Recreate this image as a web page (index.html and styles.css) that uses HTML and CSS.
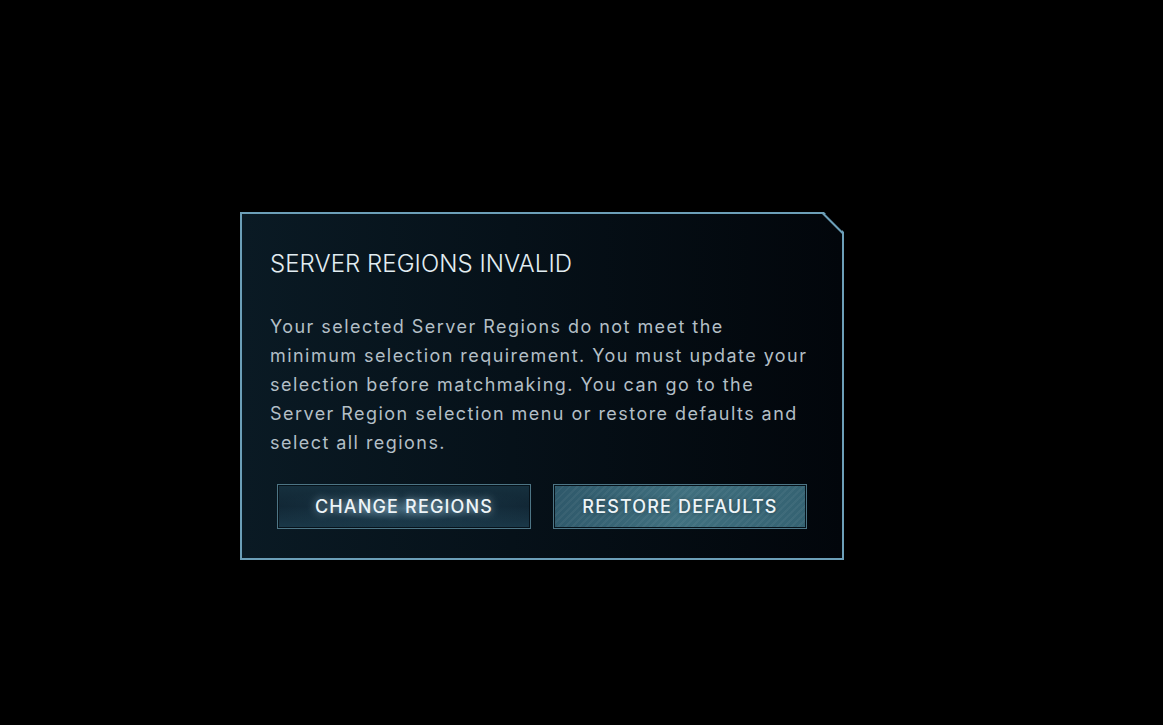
FILE: index.html
```html
<!DOCTYPE html>
<html lang="en">

<head>
    <meta charset="UTF-8">
    <meta name="viewport" content="width=device-width, initial-scale=1.0">
    <title>Server Regions Invalid</title>
    <link rel="stylesheet" href="styles.css">
</head>

<body>
    <div class="screen">
        <div class="dialog">
            <h1 class="dialog-title">SERVER REGIONS INVALID</h1>
            <p class="dialog-text">
                Your selected Server Regions do not meet the<br>
                minimum selection requirement. You must update your<br>
                selection before matchmaking. You can go to the<br>
                Server Region selection menu or restore defaults and<br>
                select all regions.
            </p>
            <div class="actions">
                <button class="btn btn-glow"><span>CHANGE REGIONS</span></button>
                <button class="btn btn-focus"><span>RESTORE DEFAULTS</span></button>
            </div>
        </div>
    </div>
</body>

</html>
```

FILE: styles.css
```css
html,
body {
    margin: 0;
    background-color: #000;
    height: 100%;
}

.screen {
    padding: 212px 0 0 240px;
}

.dialog {
    position: relative;
    box-sizing: border-box;
    width: 604px;
    height: 348px;
    padding: 34px 28px 0 28px;
    border: 2px solid #6c9fb8;
    background: linear-gradient(90deg, #0a1a24 0%, #061119 45%, #02060b 100%);
    clip-path: polygon(0 0, calc(100% - 20px) 0, 100% 20px, 100% 100%, 0 100%);
    font-family: Inter, "Noto Sans", sans-serif;
}

/* the cut corner needs its own edge line */
.dialog::after {
    content: "";
    position: absolute;
    top: -2px;
    left: 581px;
    width: 30px;
    height: 2px;
    background-color: #6c9fb8;
    transform-origin: 0 0;
    transform: rotate(45deg);
}

.dialog-title {
    margin: 0;
    font-size: 24px;
    font-weight: 300;
    letter-spacing: 0.05px;
    line-height: 32px;
    color: #e2edf2;
}

.dialog-text {
    margin: 32px 0 0 0;
    font-size: 18px;
    font-weight: 400;
    letter-spacing: 1.45px;
    line-height: 29px;
    color: #b3bfc6;
}

.actions {
    display: flex;
    gap: 22px;
    margin-top: 27px;
    padding-left: 7px;
}

.btn {
    box-sizing: border-box;
    width: 254px;
    height: 45px;
    padding: 1px;
    border: 1px solid #4d7585;
    background-color: #06121a;
    font-family: Inter, "Noto Sans", sans-serif;
    font-size: 18px;
    font-weight: 500;
    letter-spacing: 1.15px;
    color: #eef5f8;
    cursor: pointer;
}

.btn span {
    display: flex;
    align-items: center;
    justify-content: center;
    height: 100%;
}

.btn-glow span {
    background:
        radial-gradient(ellipse 55% 50% at 50% 55%, rgba(100, 150, 175, 0.5) 0%, rgba(40, 80, 100, 0.15) 60%, rgba(0, 0, 0, 0) 100%),
        linear-gradient(180deg, #16303e 0%, #112634 50%, #1a3848 100%);
    text-shadow: 0 0 8px rgba(200, 230, 245, 0.7);
}

.btn-focus span {
    background:
        repeating-linear-gradient(135deg, rgba(255, 255, 255, 0.045) 0 2px, rgba(0, 0, 0, 0) 2px 5px),
        linear-gradient(100deg, #2e586a 0%, #40707f 50%, #346272 100%);
    text-shadow: 0 0 4px rgba(0, 0, 0, 0.4);
}

.btn:hover span {
    filter: brightness(1.1);
}
```
